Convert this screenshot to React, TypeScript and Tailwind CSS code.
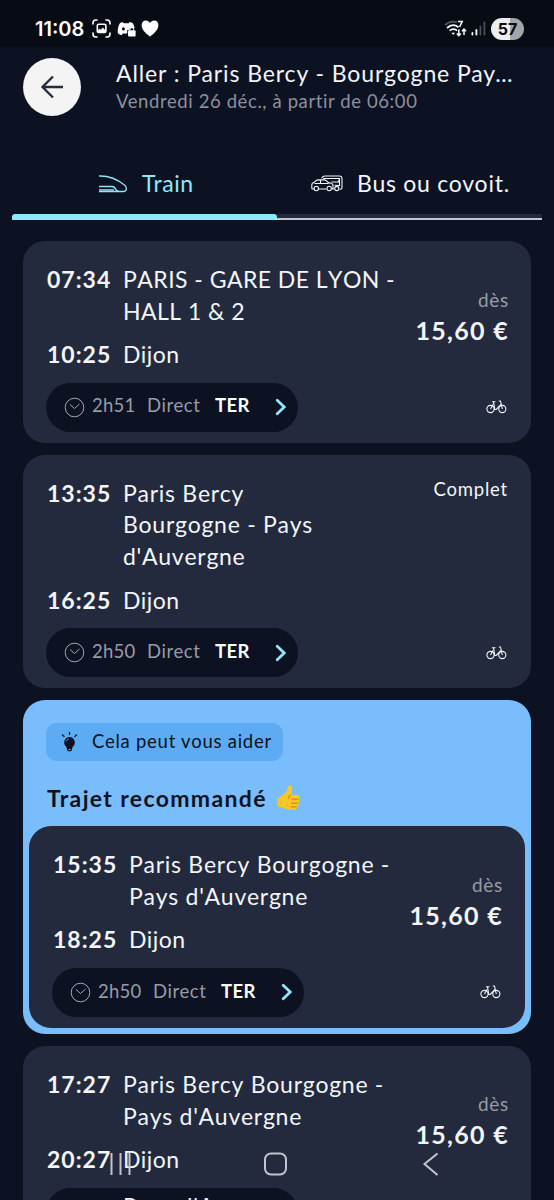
import type { ReactNode } from "react";

type Trip = {
  departure: string;
  from: string[];
  arrival: string;
  to: string;
  duration?: string;
  price?: string;
};

const TRIPS: Trip[] = [
  { departure: "07:34", from: ["PARIS - GARE DE LYON -", "HALL 1 & 2"], arrival: "10:25", to: "Dijon", duration: "2h51", price: "15,60 €" },
  { departure: "13:35", from: ["Paris Bercy", "Bourgogne - Pays", "d'Auvergne"], arrival: "16:25", to: "Dijon", duration: "2h50" },
];

const RECOMMENDED: Trip = {
  departure: "15:35", from: ["Paris Bercy Bourgogne -", "Pays d'Auvergne"], arrival: "18:25", to: "Dijon", duration: "2h50", price: "15,60 €",
};

const NEXT: Trip = {
  departure: "17:27", from: ["Paris Bercy Bourgogne -", "Pays d'Auvergne"], arrival: "20:27", to: "Dijon", price: "15,60 €",
};

function StatusBar() {
  return (
    <div className="flex h-[47px] items-center bg-[#070b14] pt-[10px] pr-[30px] pl-[35px] text-white">
      <span className="w-[57px] font-['Inter'] text-[20px] font-semibold">11:08</span>
      <svg className="h-[19px] w-[19px]" viewBox="0 0 19 19" fill="none" stroke="currentColor" strokeWidth="1.6" strokeLinecap="round">
        <path d="M1 5V4a3 3 0 0 1 3-3h1M14 1h1a3 3 0 0 1 3 3v1M18 14v1a3 3 0 0 1-3 3h-1M5 18H4a3 3 0 0 1-3-3v-1" />
        <rect x="5.300" y="5.300" width="8.600" height="8.200" rx="1.500" />
        <path d="M5.500 12l2-2 1.500 1 1.700-2.200 3 3v1.500h-8z" fill="currentColor" strokeWidth="0.5" />
      </svg>
      <svg className="ml-[6px] h-[18px] w-[19px]" viewBox="0 0 19 18" fill="currentColor">
        <path
          fillRule="evenodd"
          d="M5.800 2 3 3C1.200 6 .4 9.500.8 13.200c1.200 1 2.500 1.700 3.900 2l1-1.700h4.500V10h2.500V8.200h5C17.300 6.300 16.700 4.500 15.700 3l-3.300-1-.7 1.200H6.500zM6.400 7.300a1.500 1.600 0 1 0 0 3.200 1.500 1.600 0 0 0 0-3.200z"
        />
        <rect x="11" y="10.300" width="7.600" height="6.200" rx="1" />
        <path d="M13 10.500V9.300a1.800 1.800 0 0 1 3.600 0v1.200" fill="none" stroke="currentColor" />
      </svg>
      <svg className="ml-[5px] h-[17px] w-[18px]" viewBox="0 0 18 17" fill="currentColor">
        <path d="M9 16.500C7.600 15.300.6 10.800.6 5.200.6 2.500 2.500.6 4.900.6c1.700 0 3.300 1 4.100 2.500C9.800 1.600 11.400.6 13.100.6c2.400 0 4.300 1.900 4.300 4.600 0 5.600-7 10.100-8.400 11.300z" />
      </svg>
      <svg className="ml-auto h-[18px] w-[23px]" viewBox="0 0 23 18" fill="none" stroke="currentColor" strokeWidth="1.700">
        <path d="M1 5.200C4.500 1.800 9 .9 13 2.200" stroke="#55585f" />
        <path d="M3 8C6.500 4.800 11 4.600 14.500 7.200M5.600 10.700c2.500-2 5.300-2 7.500 0" />
        <path d="M7.500 12.800h3.500L9.200 15z" fill="currentColor" stroke="none" />
        <path d="M14 1.600h4.200L15.600 7M14.800 9.500v6M12.800 13.600l2 2.100 2-2.100M20 15V9.500M18 11.300l2-2.100 2 2.100" strokeWidth="1.500" />
      </svg>
      <svg className="ml-[4px] h-[15px] w-[15px]" viewBox="0 0 15 15" fill="currentColor">
        <rect x="0.500" y="11" width="1.800" height="3.500" rx="0.900" />
        <rect x="4.500" y="8" width="1.800" height="6.500" rx="0.900" />
        <rect x="8.500" y="4.500" width="1.800" height="10" rx="0.900" fill="#4c4f57" />
        <rect x="12.500" y="0.500" width="1.800" height="14" rx="0.900" fill="#4c4f57" />
      </svg>
      <div className="ml-[5px] flex h-[22px] w-[33px] items-center justify-center rounded-full bg-linear-to-r from-[#eeeeee] from-57% to-[#a3a5a8] to-57% font-['Inter'] text-[16px] leading-[22px] font-bold text-[#0a0d16]">
        57
      </div>
    </div>
  );
}

function Header() {
  return (
    <header className="flex h-[85px] items-start pt-[11px] pl-[23px]">
      <button className="flex h-[58px] w-[58px] shrink-0 items-center justify-center rounded-full bg-[#f4f4f4]">
        <svg className="h-6 w-6" viewBox="0 0 24 24" fill="none" stroke="#242b3d" strokeWidth="2.300">
          <path d="M23 12H2.500M13 1.500 2.500 12 13 22.500" />
        </svg>
      </button>
      <div className="-mt-px ml-[35px] whitespace-nowrap">
        <h1 className="text-[23px] leading-[32px] tracking-[0.9px] text-[#f3f5f9]">Aller : Paris Bercy - Bourgogne Pay…</h1>
        <p className="text-[18.5px] leading-[25px] tracking-[0.6px] text-[#8c909c]">Vendredi 26 déc., à partir de 06:00</p>
      </div>
    </header>
  );
}

function TrainIcon() {
  return (
    <svg className="h-[18px] w-[30px]" viewBox="0 0 30 18" fill="none" stroke="currentColor" strokeWidth="1.300">
      <path d="M1 1c9-.3 18 3 25.500 9 2.500 2 2.800 6.500-1 6.500H1M1 11.500h13c2.500 0 3.200 1.500 3.800 3 .4 1 1.200 1.500 2.500 1.500M1 14.800h15" />
    </svg>
  );
}

function BusCarIcon() {
  return (
    <svg className="h-[17px] w-[32px]" viewBox="0 0 32 17" fill="none" stroke="currentColor" strokeWidth="1.100">
      <path d="M10.500 3.200C11.500 1.700 12.500 1 14 1h14.500c1.700 0 2.500 1 2.500 2.500v9.200c0 1-.5 1.500-1.500 1.500h-1M23.500 14h-2M12 3.500h16.500L27.500 7h-7M28.500 3.500v7l-5-.3" />
      <path d="M3 14H1.600c-.5 0-.8-.4-.8-1V10c0-1.500 1-2.500 2.500-2.800L5 5.700c.7-.6 1.300-.8 2.500-.8H13c1 0 1.700.3 2.500 1l2 1.700c3 .3 4.500 1.200 4.500 3.100v2c0 .8-.3 1.300-1 1.300M7.500 14h8M3.500 8.500h14M9.500 5V8.500" />
      <circle cx="5.300" cy="13.500" r="2.200" />
      <circle cx="18.200" cy="13.500" r="2.200" />
      <circle cx="25.800" cy="13.500" r="2.100" />
    </svg>
  );
}

function Tabs() {
  return (
    <nav className="mx-3 flex h-[88px]">
      <button className="flex w-[265px] flex-col text-[23px] tracking-[0.5px] text-[#8fe8fa]">
        <span className="flex flex-1 items-center pt-[21px] pl-[86px]">
          <TrainIcon />
          <span className="ml-[14px]">Train</span>
        </span>
        <span className="h-1.5 w-full rounded-t-[3px] bg-[#8fe8fa]" />
      </button>
      <button className="flex flex-1 flex-col text-[23px] tracking-[0.75px] text-[#f3f5f9]">
        <span className="flex flex-1 items-center pt-[21px] pl-[34px] whitespace-nowrap">
          <BusCarIcon />
          <span className="ml-[14px]">Bus ou covoit.</span>
        </span>
        <span className="h-1 w-full bg-[#242a3b]" />
        <span className="h-0.5 w-full bg-[#c3c6cf]" />
      </button>
    </nav>
  );
}

function BikeIcon() {
  return (
    <svg className="h-[14px] w-[21px]" viewBox="0 0 21 14" fill="none" stroke="#f3f5f9" strokeWidth="1.100">
      <circle cx="4.500" cy="9" r="3.600" />
      <circle cx="16.300" cy="9" r="3.600" />
      <path d="M4.500 9 7 4.500M7.500 2l1.300 7.500h1.400L15 4.500M6 1.800h3.500M12.800 1h1.700l1.800 8" />
    </svg>
  );
}

function DurationPill({ duration }: { duration?: string }) {
  return (
    <div className="flex h-[49px] w-[252px] items-center rounded-full bg-[#0d1223] pl-[18px] text-[18.5px]">
      {duration && (
        <>
          <svg className="h-[21px] w-[21px]" viewBox="0 0 21 21" fill="none" stroke="#a4a7b0" strokeWidth="1">
            <circle cx="10.500" cy="10.500" r="9.300" />
            <path d="m6 7.500 4.500 4 5-4.500" />
          </svg>
          <div className="ml-[7px] flex pb-[2px]">
            <span className="w-[55px] tracking-[0.2px] text-[#989ba6]">{duration}</span>
            <span className="w-[68px] tracking-[0.6px] text-[#989ba6]">Direct</span>
            <span className="font-bold tracking-[0.4px] text-white">TER</span>
          </div>
          <svg className="mr-[11px] ml-auto h-[18px] w-[12px]" viewBox="0 0 12 18" fill="none" stroke="#8fe8fa" strokeWidth="2.800" strokeLinecap="round">
            <path d="m2.200 2.200 7 6.800-7 6.800" />
          </svg>
        </>
      )}
    </div>
  );
}

function TripCard({ trip }: { trip: Trip }) {
  return (
    <article className="relative rounded-[22px] bg-[#242a3d] px-6 pt-[23px] pb-[11px] text-[23px] leading-[31.6px] text-[#f3f5f9]">
      <div className="flex">
        <span className="w-[76px] font-bold tracking-[1px]">{trip.departure}</span>
        <div className="whitespace-nowrap [font-kerning:none]">
          {trip.from.map((line) => (
            <div key={line} className={line === line.toUpperCase() ? "tracking-[0.45px]" : "tracking-[0.72px]"}>
              {line}
            </div>
          ))}
        </div>
      </div>
      <div className="mt-3 flex">
        <span className="w-[76px] font-bold tracking-[1px]">{trip.arrival}</span>
        <span className="tracking-[0.5px]">{trip.to}</span>
      </div>
      <div className="mt-3 -ml-px flex items-center justify-between">
        <DurationPill duration={trip.duration} />
        {trip.duration && <BikeIcon />}
      </div>
      {trip.price ? (
        <div className="absolute top-[44.5px] right-[22px] text-right">
          <div className="text-[19px] leading-[27px] tracking-[0.7px] text-[#989ba6]">dès</div>
          <div className="text-[25px] leading-[34px] font-bold tracking-[1.3px]">{trip.price}</div>
        </div>
      ) : (
        <div className="absolute top-[19.5px] right-[23px] text-[18.5px] tracking-[0.8px]">Complet</div>
      )}
    </article>
  );
}

function Badge({ children }: { children: ReactNode }) {
  return (
    <div className="ml-[23px] flex h-[38px] w-[237px] items-center rounded-[11px] bg-[#5dabf3] pl-[15px] text-[18.5px] tracking-[0.75px] whitespace-nowrap">
      <svg className="mr-[14px] h-5 w-[17px]" viewBox="0 0 17 20" fill="none" stroke="#0d1223" strokeWidth="1.200">
        <path d="M8.500 0v3M1 2.500l2.500 2.200M16 2.500l-2.500 2.200" />
        <path d="M8.500 5a5.500 5.500 0 0 0-3.200 9.800L6 17h5l.7-2.200A5.500 5.500 0 0 0 8.500 5z" fill="#0d1223" stroke="none" />
        <path d="M6.500 16.500c0 3 4 3 4 0" />
        <path d="M5.500 9.200c.3-1.300 1-2 2.200-2.200" stroke="#5dabf3" strokeWidth="1" />
      </svg>
      <span className="pb-px">{children}</span>
    </div>
  );
}

function ThumbsUp() {
  return (
    <svg className="h-[26px] w-[24px]" viewBox="0 0 24 26">
      <path
        d="M1.500 14.500c0-1.200.6-2 1.800-2.500 3.200-1.300 6.500-3.800 8.300-7.400.4-1.800.4-3.600 1.400-4.200 2.200-.8 3.500 1.200 3.300 3.400-.2 2.200-.9 4.200-1.300 6l6.500.2c2.200.1 2.800 3 .8 4 1.700 1 1.500 3.500-.2 4.100 1.100 1.200.6 3-1 3.600.6 1.700-.6 3-2.600 3.100-4.500.3-8-.2-11.200-2-1.800-.9-4.800-.5-5.500-1.500-.5-1.800-.4-5-.3-6.800z"
        fill="#fdc626"
      />
      <path d="M15.400 13.700c2 .6 4.600.7 6.600.3M15.200 17.800c2.200.6 4.600.7 6.600.2M14.800 21.500c2 .6 4 .7 5.800.1M15 10c-1.800.8-2.700 2-2.600 4" fill="none" stroke="#e08d0c" strokeWidth="1.300" />
    </svg>
  );
}

function NavBar() {
  return (
    <svg className="absolute bottom-0 left-0 h-[72px] w-full" viewBox="0 0 554 72" fill="none" stroke="#c4c4ce" strokeWidth="2">
      <path d="M111.500 25v22M120.500 25v22M129.500 25v22" />
      <rect x="265" y="25.500" width="21" height="21" rx="6" />
      <path d="m437.500 25.500-13 10.500 13 11" />
    </svg>
  );
}

export default function App() {
  return (
    <div className="relative h-[1200px] w-[554px] overflow-hidden bg-[#0d1223] font-['Lato',sans-serif]">
      <StatusBar />
      <Header />
      <Tabs />
      <main className="flex flex-col gap-3 px-[23px] pt-[21px]">
        {TRIPS.map((trip) => (
          <TripCard key={trip.departure} trip={trip} />
        ))}
        <section className="rounded-[22px] bg-[#7abdfc] px-1.5 pt-[23px] pb-1.5 text-[#0d1223]">
          <div className="-ml-1.5">
            <Badge>Cela peut vous aider</Badge>
            <h2 className="mt-[21px] mb-[12px] ml-[24px] flex h-8 items-center gap-[9px] text-[23px] font-bold tracking-[1.35px]">
              Trajet recommandé
              <ThumbsUp />
            </h2>
          </div>
          <TripCard trip={RECOMMENDED} />
        </section>
        <TripCard trip={NEXT} />
      </main>
      {/* next row scrolling in under the system bar */}
      <div className="absolute top-[1190px] left-[123px] text-[23px] leading-[32px] tracking-[0.72px] whitespace-nowrap text-[#f3f5f9] [font-kerning:none]">
        Pays d'Auvergne
      </div>
      <NavBar />
    </div>
  );
}
